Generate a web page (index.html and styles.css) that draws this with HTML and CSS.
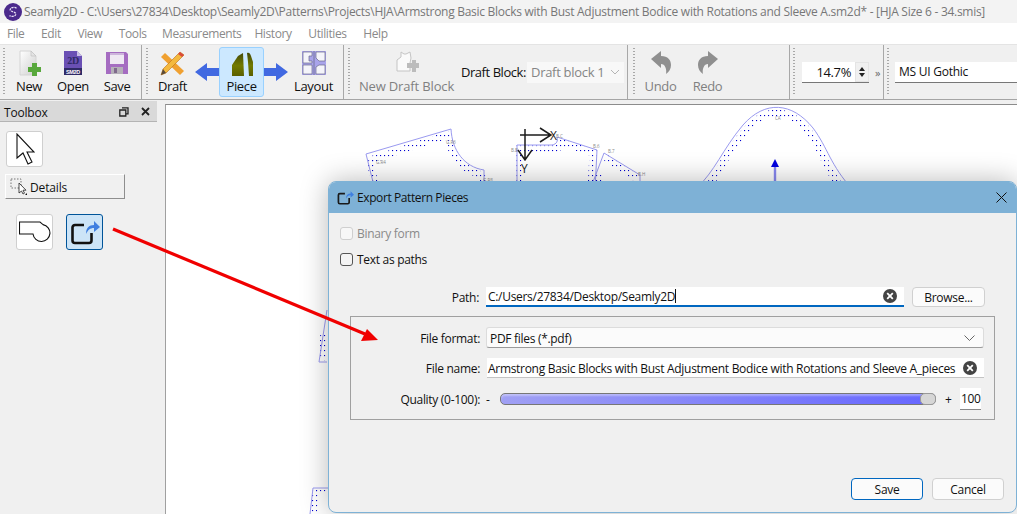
FILE: index.html
```html
<!DOCTYPE html>
<html lang="en">
<head>
<meta charset="utf-8">
<title>Seamly2D</title>
<link rel="stylesheet" href="styles.css">
</head>
<body>
<div class="app">
  <header class="titlebar">
    <svg class="logo" width="18" height="18" viewBox="0 0 18 18"><circle cx="9" cy="9" r="9" fill="#4b2a8c"/><path d="M12.5 5.2C10.5 3.8 6.5 4.2 6.2 6.6 6 9 11.8 8.5 11.8 11c0 2.4-4 3-6.3 1.6" fill="none" stroke="#e9e2f5" stroke-width="1.3" stroke-dasharray="2.2 .8"/></svg>
    <span class="title-text">Seamly2D - C:\Users\27834\Desktop\Seamly2D\Patterns\Projects\HJA\Armstrong Basic Blocks with Bust Adjustment Bodice with Rotations and Sleeve A.sm2d* - [HJA Size 6 - 34.smis]</span>
  </header>
  <nav class="menubar">
    <span>File</span><span>Edit</span><span>View</span><span class="m-tools">Tools</span><span class="m-meas">Measurements</span><span>History</span><span>Utilities</span><span>Help</span>
  </nav>
  <div class="toolbar">
    <section class="tb-group g1">
      <i class="grip"></i>
      <div class="tool w44">
        <svg width="24" height="26" viewBox="0 0 24 26"><defs><linearGradient id="pg" x1="0" y1="0" x2="1" y2="1"><stop offset="0" stop-color="#fff"/><stop offset="1" stop-color="#cfcfcf"/></linearGradient></defs><path d="M3 1h11l5 5v19H3z" fill="url(#pg)" stroke="#d4d4d4"/><path d="M14 1v5h5z" fill="#e4e4e4" stroke="#bdbdbd" stroke-width=".6"/><path d="M15 13h5v4h4v5h-4v4h-5v-4h-4v-5h4z" fill="#58a83c"/></svg>
        <span>New</span>
      </div>
      <div class="tool w44">
        <svg width="24" height="26" viewBox="0 0 24 26"><path d="M3 1h13l5 5v19H3z" fill="#6a50b4"/><path d="M16 1v5h5z" fill="#c9bfe6"/><rect x="3" y="18" width="18" height="7" fill="#2f2a66"/><text class="svg-2d" x="12" y="14" text-anchor="middle">2D</text><text class="svg-sm" x="12" y="24" text-anchor="middle">SM2D</text></svg>
        <span>Open</span>
      </div>
      <div class="tool w44">
        <svg width="24" height="26" viewBox="0 0 24 26"><path d="M1 2h20l2 2v20H1z" fill="#a56cc1"/><rect x="5" y="3" width="14" height="11" fill="#efe8f3"/><rect x="5" y="3" width="14" height="2" fill="#cdb4dc"/><rect x="6" y="17" width="12" height="7" fill="#b5b0b8"/><rect x="9" y="18" width="3" height="5" fill="#7f6a8c"/></svg>
        <span>Save</span>
      </div>
    </section>
    <section class="tb-group g2">
      <i class="grip"></i>
      <div class="tool w45">
        <svg width="26" height="26" viewBox="0 0 26 26"><path d="M6 2l19 18-4 4L2 6z" fill="#f0a030" transform="translate(-1 1)"/><path d="M20 2l4 3L6 23l-5 2 2-6z" fill="#f4b93e" stroke="#b86f1a" stroke-width=".6"/><path d="M20 2l4 3-2 2-4-3z" fill="#d94a3a"/><path d="M1 25l2-6 3 4z" fill="#5a4a3a"/></svg>
        <span>Draft</span>
      </div>
      <svg class="flow-arrow" width="24" height="18" viewBox="0 0 24 18"><path d="M0 9l12-9v5h12v8H12v5z" fill="#4169e1"/></svg>
      <div class="tool w45 active">
        <svg width="26" height="26" viewBox="0 0 26 26"><defs><linearGradient id="ol" x1="0" y1="0" x2="0" y2="1"><stop offset="0" stop-color="#454a08"/><stop offset=".55" stop-color="#727a00"/><stop offset="1" stop-color="#5a6000"/></linearGradient></defs><path d="M3 25V14L9 5l5-3 1 23z" fill="url(#ol)"/><path d="M18 2c2-.5 3 0 4 3l2 6v14h-4l-1-14z" fill="url(#ol)"/></svg>
        <span>Piece</span>
      </div>
      <svg class="flow-arrow" width="24" height="18" viewBox="0 0 24 18"><path d="M24 9L12 0v5H0v8h12v5z" fill="#4169e1"/></svg>
      <div class="tool w51">
        <svg width="26" height="26" viewBox="0 0 26 26"><rect x="1" y="1" width="24" height="24" fill="#a9a4ea"/><path d="M2 2h9v4H8v5h3v2H2zM15 2h9v9h-6l-3-3zM2 15h9v9H2zM15 17l3-2h6v9h-9z" fill="#f4f4fa" stroke="#6a6a8a" stroke-width=".7"/><path d="M13 1v24" stroke="#6a6a8a" stroke-width=".8"/></svg>
        <span>Layout</span>
      </div>
    </section>
    <section class="tb-group g3">
      <i class="grip"></i>
      <div class="tool w109 off wide-label">
        <svg width="24" height="26" viewBox="0 0 24 26"><path d="M6 2l3 2h2l4-2 1 6-1 5v8H2V10l4-3z" fill="#fafafa" stroke="#c4c4c4"/><path d="M12 13h5v-3h4v3h3v5h-3v4h-4v-4h-5z" fill="#bcbcbc"/></svg>
        <span>New Draft Block</span>
      </div>
      <span class="draft-label">Draft Block:</span>
      <div class="draft-combo"><span>Draft block 1</span><svg width="10" height="6" viewBox="0 0 10 6"><path d="M1 1l4 4 4-4" fill="none" stroke="#b5b5b5"/></svg></div>
    </section>
    <section class="tb-group g4">
      <i class="grip"></i>
      <div class="tool w47 off">
        <svg width="24" height="26" viewBox="0 0 24 26"><path d="M2 9L12 1v5c7 0 10 4 10 9 0 4-2 7-5 9 1-5-1-10-5-10v4z" fill="#8f8f8f"/></svg>
        <span>Undo</span>
      </div>
      <div class="tool w47 off">
        <svg width="24" height="26" viewBox="0 0 24 26"><path d="M22 9L12 1v5C5 6 2 10 2 15c0 4 2 7 5 9-1-5 1-10 5-10v4z" fill="#8f8f8f"/></svg>
        <span>Redo</span>
      </div>
    </section>
    <section class="tb-group g5">
      <i class="grip"></i>
      <div class="zoom-spin"><span class="zoom-val">14.7%</span><span class="spin-btns"><b></b><b class="down"></b></span></div>
      <span class="more">»</span>
    </section>
    <section class="tb-group g6">
      <i class="grip"></i>
      <div class="font-combo">MS UI Gothic</div>
    </section>
  </div>
  <main class="workspace">
    <aside class="toolbox">
      <div class="dock-title">
        <span>Toolbox</span>
        <span class="dock-icons">
          <svg width="10" height="10" viewBox="0 0 10 10"><path d="M3 .8h6v6H7M.8 3h6v6h-6z" fill="none" stroke="#222" stroke-width="1.3"/></svg>
          <svg width="9" height="9" viewBox="0 0 9 9"><path d="M1 1l7 7M8 1L1 8" stroke="#222" stroke-width="1.8"/></svg>
        </span>
      </div>
      <div class="tool-btn pointer">
        <svg width="20" height="32" viewBox="0 0 20 32"><path d="M2 1v24l6-5 5 11 4-2-5-10h7z" fill="#fff" stroke="#111" stroke-width="1.1"/></svg>
      </div>
      <div class="details-btn">
        <svg width="18" height="18" viewBox="0 0 18 18"><rect x="1" y="1" width="10" height="9" fill="none" stroke="#777" stroke-dasharray="1.5 1.5"/><path d="M9 5v10l2.500-2 1.500 3 1.500-.8-1.500-3h3z" fill="#fff" stroke="#222" stroke-width=".8"/><path d="M17 15v2h-2z" fill="#111"/></svg>
        <span>Details</span>
      </div>
      <div class="tool-pair">
        <div class="tool-btn">
          <svg width="32" height="22" viewBox="0 0 32 22"><path d="M.5 1H21L24 3.600A8.500 8.500 0 1 1 14 13H.5z" fill="#fff" stroke="#111" stroke-width="1.100"/></svg>
        </div>
        <div class="tool-btn selected">
          <svg width="30" height="26" viewBox="0 0 30 26"><path d="M14 6H5a2.500 2.500 0 0 0-2.500 2.500v13A2.500 2.500 0 0 0 5 24h14a2.500 2.500 0 0 0 2.500-2.500V14" fill="none" stroke="#111" stroke-width="2.600"/><path d="M16 15c0-6 3-9 8-9V2l6 6-6 5V9c-4 0-6 2-8 6z" fill="#3f7fe0"/></svg>
        </div>
      </div>
    </aside>
    <section class="canvas">
      <svg class="drawing" width="852" height="410" viewBox="165 104 852 410">
        <defs>
          <pattern id="dots" width="4" height="5" patternUnits="userSpaceOnUse"><rect width="1.100" height="1.100" fill="#0000d0"/></pattern>
        </defs>
        <g class="band">
          <path d="M370 160L448 135C450 156 464 171 482 175V190"/>
          <path d="M370 160L376 190"/>
          <path d="M520 190V149H553C560 148 562 146 561 142L593 153L591 190"/>
          <path d="M606 158L636 178"/>
          <path d="M600 172L596 190"/>
          <path d="M706 190C720 172 726 152 746 130C766 106 790 108 809 132C824 152 826 172 844 190"/>
          <path d="M324 332L322 360"/>
          <path d="M316 491L313 514"/>
          <path d="M316 491H328"/>
        </g>
        <g class="outline">
          <path d="M366 154L451 129C452 150 464 167 484 170V190H375z"/>
          <path d="M517 190V145H552C557 144 558 141 557 137L597 150L595 190"/>
          <path d="M590 190L604 153L640 175V190"/>
          <path d="M695 190C716 170 722 150 743 125C765 100 792 102 813 128C828 148 830 165 853 190"/>
          <path d="M327 310L319 362H327"/>
          <path d="M328 488H313L310 514"/>
        </g>
        <g class="labels">
          <text x="376" y="164">G.R4</text><text x="446" y="144">G.R6</text><text x="483" y="182">G.R8</text><text x="511" y="152">B.B</text><text x="556" y="138">B.C</text><text x="593" y="148">B.6</text><text x="608" y="153">B.7</text><text x="638" y="176">B.H</text><text x="775" y="120">CA</text>
        </g>
        <path class="axis" d="M520 135H550M540 128L551 135L540 142M525 129V160M518 150L525 160L532 150"/>
        <text class="axis-x" x="550" y="140">X</text>
        <text class="axis-y" x="521" y="173">Y</text>
        <path class="normal" d="M775 181V165"/>
        <path d="M775 159l4 8h-8z" fill="#0000e0"/>
      </svg>
    </section>
  </main>

  <div class="dialog">
    <div class="dlg-title">
      <svg width="17" height="15" viewBox="0 0 30 26"><path d="M14 6H5a2.500 2.500 0 0 0-2.500 2.500v13A2.500 2.500 0 0 0 5 24h14a2.500 2.500 0 0 0 2.500-2.500V14" fill="none" stroke="#1a1a1a" stroke-width="3"/><path d="M16 15c0-6 3-9 8-9V2l6 6-6 5V9c-4 0-6 2-8 6z" fill="#3f7fe0"/></svg>
      <span>Export Pattern Pieces</span>
      <svg class="dlg-close" width="11" height="11" viewBox="0 0 11 11"><path d="M.5.5l10 10M10.500.5l-10 10" stroke="#111" stroke-width="1"/></svg>
    </div>
    <div class="dlg-body">
      <label class="check disabled"><i class="box"></i>Binary form</label>
      <label class="check second"><i class="box"></i>Text as paths</label>
      <div class="path-row">
        <span class="path-label">Path:</span>
        <div class="field focused"><span>C:/Users/27834/Desktop/Seamly2D</span><i class="caret"></i><svg class="clear" width="14" height="14" viewBox="0 0 14 14"><circle cx="7" cy="7" r="7" fill="#444"/><path d="M4.200 4.200l5.600 5.600M9.800 4.200l-5.600 5.600" stroke="#fff" stroke-width="1.800"/></svg></div>
        <div class="btn browse">Browse...</div>
      </div>
      <div class="group">
        <span class="g-label">File format:</span>
        <div class="combo"><span>PDF files (*.pdf)</span><svg width="11" height="6" viewBox="0 0 11 6"><path d="M.5.5l5 5 5-5" fill="none" stroke="#666"/></svg></div>
        <span class="g-label">File name:</span>
        <div class="field name"><span>Armstrong Basic Blocks with Bust Adjustment Bodice with Rotations and Sleeve A_pieces</span><svg class="clear" width="14" height="14" viewBox="0 0 14 14"><circle cx="7" cy="7" r="7" fill="#444"/><path d="M4.200 4.200l5.600 5.600M9.800 4.200l-5.600 5.600" stroke="#fff" stroke-width="1.800"/></svg></div>
        <span class="g-label">Quality (0-100):</span>
        <div class="quality">
          <span class="sign">-</span>
          <div class="slider"><i class="handle"></i></div>
          <span class="sign plus">+</span>
          <div class="q-spin">100</div>
        </div>
      </div>
      <div class="dlg-actions">
        <div class="btn primary">Save</div>
        <div class="btn">Cancel</div>
      </div>
    </div>
  </div>

  <svg class="annotation" width="1017" height="514" viewBox="0 0 1017 514">
    <path d="M113 229L365 334" stroke="#f00000" stroke-width="3.200" fill="none"/>
    <path d="M378 340L361 341L367 329z" fill="#f00000"/>
  </svg>
</div>
</body>
</html>
```
FILE: styles.css
```css
* { box-sizing: border-box; }
html, body { margin: 0; padding: 0; }
body { width: 1017px; height: 514px; overflow: hidden; font-family: "Open Sans", "Liberation Sans", sans-serif; font-size: 12px; color: #111; background: #f0f0f0; }
.app { position: relative; width: 1017px; height: 514px; display: flex; flex-direction: column; overflow: hidden; }
i { display: block; }

.titlebar { height: 23px; flex: none; display: flex; align-items: center; padding-left: 4px; background: #f3f3f3; color: #777; }
.logo { flex: none; margin-right: 2px; }
.title-text { white-space: nowrap; letter-spacing: -.28px; }

.menubar { height: 22px; flex: none; display: flex; align-items: center; padding-left: 7px; background: #fff; color: #8a8a8a; letter-spacing: -.4px; border-bottom: 1px solid #e4e4e4; }
.menubar span { margin-right: 16.700px; }
.menubar .m-tools { margin-right: 15.500px; }
.menubar .m-meas { margin-right: 13px; }

.toolbar { height: 55px; flex: none; display: flex; background: #f0f0f0; border-bottom: 1px solid #a5a5a5; }
.tb-group { display: flex; align-items: stretch; padding-left: 3px; border-right: 1px solid #a8a8a8; }
.g1 { width: 142px; }
.g2 { width: 202px; padding-left: 4px; }
.g3 { width: 284px; padding-left: 4px; }
.g4 { width: 162px; padding-left: 5px; }
.g5 { width: 94px; }
.g6 { width: 133px; border-right: 0; }
.grip { width: 2px; margin: 3px 2px 4px 0; flex: none; background: repeating-linear-gradient(to bottom, #a8a8a8 0 1px, transparent 1px 3px); }

.tool { display: flex; flex-direction: column; align-items: center; justify-content: space-between; padding: 5px 0 4px; font-size: 13px; letter-spacing: -.35px; line-height: 17px; flex: none; }
.w44 { width: 44px; }
.w45 { width: 45px; }
.w47 { width: 47px; }
.w51 { width: 51px; }
.w109 { width: 109px; }
.off { color: #808080; }
.wide-label { letter-spacing: -.15px; }
.active { background: #cce8ff; border: 1px solid #99d1ff; border-radius: 3px; margin: 2px 0 2px; padding: 3px 0 1px; }
.flow-arrow { align-self: flex-start; margin-top: 18px; flex: none; }

.draft-label { align-self: center; width: 66px; flex: none; font-size: 13px; letter-spacing: -.45px; margin-top: -1px; }
.draft-combo { align-self: center; width: 97px; height: 21px; flex: none; display: flex; align-items: center; justify-content: space-between; padding: 0 4px; background: #f8f8f8; color: #858585; font-size: 13px; letter-spacing: -.3px; }

.zoom-spin { align-self: center; margin-left: 5px; width: 67px; height: 21px; flex: none; display: flex; align-items: center; justify-content: flex-end; background: #fff; border-bottom: 1px solid #777; font-size: 13px; letter-spacing: -.4px; }
.zoom-val { margin-right: 4px; }
.spin-btns { width: 14px; height: 100%; display: flex; flex-direction: column; justify-content: center; gap: 2px; background: #f0f0f0; border: 1px solid #e4e4e4; padding: 0 3px; }
.spin-btns b { width: 0; height: 0; border-left: 3px solid transparent; border-right: 3px solid transparent; border-bottom: 4px solid #222; }
.spin-btns .down { border-bottom: 0; border-top: 4px solid #222; }
.more { align-self: center; margin-left: 6px; color: #666; font-size: 11px; }
.font-combo { align-self: center; margin-left: 4px; flex: 1; height: 21px; display: flex; align-items: center; padding-left: 4px; background: #fff; border-bottom: 1px solid #777; letter-spacing: -.25px; }

.workspace { flex: 1; display: flex; min-height: 0; }
.toolbox { width: 165px; flex: none; padding-top: 1px; background: #f0f0f0; }
.dock-title { width: 157px; height: 21px; display: flex; align-items: center; justify-content: space-between; padding: 3px 7px 0 4px; background: #d9d9d9; border-bottom: 1px solid #b4b4b4; letter-spacing: -.2px; }
.dock-icons { display: flex; align-items: center; gap: 12px; margin-top: -2px; }
.tool-btn { width: 37px; height: 36px; display: flex; align-items: center; justify-content: center; background: #fff; border: 1px solid #cfcfcf; border-radius: 3px; }
.pointer { margin: 9px 0 0 6px; }
.details-btn { width: 120px; height: 25px; margin: 7px 0 0 5px; display: flex; align-items: center; gap: 2px; padding: 1px 0 0 4px; background: #f0f0f0; border: 1px solid; border-color: #fff #8e8e8e #8e8e8e #fff; letter-spacing: -.15px; }
.tool-pair { display: flex; gap: 13px; margin: 15px 0 0 16px; }
.selected { background: #cce4f7; border-color: #005499; }

.canvas { flex: 1; margin-top: 4px; background: #fff; border-top: 1px solid #8c8c8c; border-left: 1px solid #a0a0a0; overflow: hidden; }
.drawing { display: block; margin: -1px 0 0 -1px; }
.band path { fill: none; stroke: url(#dots); stroke-width: 7; }
.outline path { fill: none; stroke: #9a9af0; stroke-width: 1; }
.labels text { font: 4.500px "Open Sans", sans-serif; fill: #8a8a8a; }
.axis { fill: none; stroke: #1c1c1c; stroke-width: 1.500; }
.axis-x, .axis-y { font: 12px "Open Sans", sans-serif; fill: #222; }
.normal { stroke: #8888f0; stroke-width: 2.400; }
.svg-2d { font: bold 10px "Liberation Serif", serif; fill: #2f2a66; }
.svg-sm { font: bold 5.500px "Liberation Sans", sans-serif; fill: #fff; }

.dialog { position: absolute; left: 328px; top: 181px; width: 689px; height: 332px; display: flex; flex-direction: column; background: #f0f0f0; border: 1px solid #7eb2d6; border-radius: 8px; box-shadow: 0 0 28px rgba(0, 0, 0, .28); overflow: hidden; }
.dlg-title { height: 31px; flex: none; display: flex; align-items: center; padding: 0 9px 0 8px; gap: 3px; background: #7eb1d6; color: #111; letter-spacing: -.4px; }
.dlg-close { margin-left: auto; }
.dlg-body { flex: 1; display: flex; flex-direction: column; padding: 10px 12px 12px 11px; letter-spacing: -.3px; }
.check { height: 20px; display: flex; align-items: center; gap: 4px; }
.second { margin-top: 6px; }
.disabled { color: #8a8a8a; }
.box { width: 13px; height: 13px; border: 1px solid #555; border-radius: 3px; background: #f4f4f4; }
.disabled .box { border-color: #cfcfcf; background: #f7f7f7; }

.path-row { display: flex; align-items: stretch; height: 20px; margin-top: 18px; }
.path-label { width: 139px; flex: none; text-align: right; align-self: center; }
.field { display: flex; align-items: center; height: 20px; padding: 0 7px 0 2px; background: #fff; white-space: nowrap; }
.focused { width: 418px; margin-left: 7px; border-bottom: 2px solid #0067c0; }
.focused span { flex: none; }
.caret { width: 1px; height: 14px; background: #111; }
.clear { margin-left: auto; flex: none; }
.btn { width: 72px; height: 22px; display: flex; align-items: center; justify-content: center; background: #fbfbfb; border: 1px solid #d0d0d0; border-radius: 4px; }
.browse { width: 73px; height: 20px; margin-left: 8px; }

.group { width: 645px; height: 104px; margin: 9px 0 0 10px; padding: 10px 10px 0 0; display: grid; grid-template-columns: 129px 498px; column-gap: 6px; grid-template-rows: 21px 20px 22px; row-gap: 10px; align-items: center; border: 1px solid #a0a0a0; }
.g-label { text-align: right; }
.group .g-label:nth-of-type(1), .group .g-label:nth-of-type(2) { padding-top: 1px; }
.combo { height: 21px; display: flex; align-items: center; justify-content: space-between; padding: 1px 8px 0 3px; background: #fbfbfb; border: 1px solid #dcdcdc; border-bottom-color: #9a9a9a; border-radius: 3px; }
.name { margin-left: 1px; border-bottom: 1px solid #c4c4c4; padding-left: 1px; padding-top: 1px; }
.quality { display: flex; align-items: center; height: 22px; }
.sign { width: 14px; flex: none; }
.slider { position: relative; width: 436px; height: 12px; flex: none; background: linear-gradient(to right, #a0a0f4, #6666ff); border: 1px solid #777; border-radius: 5px; box-shadow: inset 0 2px 2px rgba(255, 255, 255, .35); }
.handle { position: absolute; right: -1px; top: -1px; width: 16px; height: 12px; background: #d6d6d6; border: 1px solid #999; border-radius: 5px; }
.plus { width: auto; margin-left: 9px; }
.q-spin { width: 21px; height: 22px; margin-left: 8px; display: flex; align-items: center; justify-content: flex-end; background: #fff; border-bottom: 1px solid #888; }

.dlg-actions { margin-top: auto; display: flex; justify-content: flex-end; gap: 9px; }
.primary { border: 1px solid #0067c0; }

.annotation { position: absolute; left: 0; top: 0; pointer-events: none; }
```
